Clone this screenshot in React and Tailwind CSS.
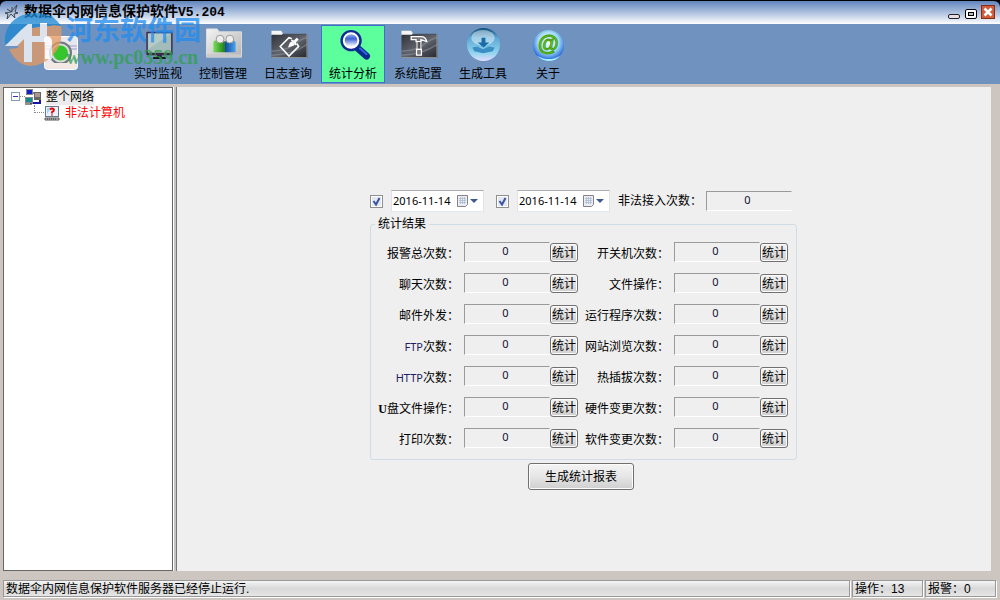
import React, { useState } from 'react';

const leftStats = ['报警总次数：', '聊天次数：', '邮件外发：', 'FTP次数：', 'HTTP次数：', 'U盘文件操作：', '打印次数：'];
const rightStats = ['开关机次数：', '文件操作：', '运行程序次数：', '网站浏览次数：', '热插拔次数：', '硬件变更次数：', '软件变更次数：'];

function MonitorIcon() {
    return (
        <svg width="40" height="36" viewBox="0 0 40 36">
            <rect x="8" y="6" width="27" height="24" rx="1" fill="#3a2a48" />
            <rect x="9.500" y="7.500" width="24" height="20" fill="#a3bcb9" />
            <path d="M10 8h23L10 24z" fill="#b7cbc6" />
            <path d="M19 30h5v2h4v2H15v-2h4z" fill="#151515" />
        </svg>
    );
}

function PeopleFolderIcon() {
    return (
        <svg width="40" height="36" viewBox="0 0 40 36">
            <defs>
                <linearGradient id="lightFolder" x1="0" y1="0" x2="1" y2="1">
                    <stop offset="0" stopColor="#f4f4f4" />
                    <stop offset="1" stopColor="#b4b4b4" />
                </linearGradient>
                <linearGradient id="greenBody" x1="0" x2="1">
                    <stop offset="0" stopColor="#7be05a" />
                    <stop offset="1" stopColor="#1b7d12" />
                </linearGradient>
                <linearGradient id="blueBody" x1="0" x2="1">
                    <stop offset="0" stopColor="#0f4a9c" />
                    <stop offset="1" stopColor="#4aa4ee" />
                </linearGradient>
            </defs>
            <path d="M3 3h11l2 3h23v26H3z" fill="url(#lightFolder)" stroke="#ddd" />
            <path d="M10 27V17q0-2 2-2h8q2 0 2 2v10z" fill="url(#greenBody)" />
            <path d="M22 27V17q0-2 2-2h6q3 0 3 3v9z" fill="url(#blueBody)" />
            <circle cx="17" cy="13.500" r="4" fill="#eee" stroke="#999" />
            <circle cx="27" cy="13.500" r="4" fill="#eee" stroke="#999" />
            <path d="M3 29h36v3H3z" fill="#c9c9c9" />
        </svg>
    );
}

function DarkFolder({ children }) {
    return (
        <svg width="40" height="36" viewBox="0 0 40 36">
            <defs>
                <linearGradient id="darkFolder" x1="0" y1="0" x2="1" y2="1">
                    <stop offset="0" stopColor="#303238" />
                    <stop offset=".5" stopColor="#60646d" />
                    <stop offset="1" stopColor="#24262b" />
                </linearGradient>
            </defs>
            <path d="M3 5h10l2 3v2H3z" fill="#f4f4f4" />
            <path d="M14 8h25v2H14z" fill="#4a4d55" />
            <path d="M3 9h37v24H3z" fill="url(#darkFolder)" />
            <path d="M3 26q16-1 23-7t14-7M3 30q20 0 37-11" fill="none" stroke="#8b8f99" strokeWidth="1.500" opacity=".6" />
            <path d="M3 32.500h36.500V9" fill="none" stroke="#999" />
            {children}
        </svg>
    );
}

function QueryIcon() {
    return (
        <DarkFolder>
            <path d="M24 13l-3-1-9 9 9 10 10-10-2-3" fill="none" stroke="#fff" strokeWidth="1.600" />
            <path d="M20 22l2-5 2-1 3 3-1 1z" fill="#fff" />
            <path d="M23 15l1-1 2 1 3-3 2 2-3 3 1 2-1 1z" fill="#fff" />
        </DarkFolder>
    );
}

function HammerIcon() {
    return (
        <DarkFolder>
            <path d="M13 11h10q5 0 6 5l-6-2v2h-5v-2h-5z" fill="#777" stroke="#fff" strokeWidth="1.300" />
            <path d="M19 16h4v8h-4z" fill="#555" stroke="#fff" />
            <path d="M18.500 24h5v6h-5z" fill="#777" stroke="#fff" strokeWidth="1.300" />
        </DarkFolder>
    );
}

function SearchIcon() {
    return (
        <svg width="40" height="36" viewBox="0 0 40 36">
            <defs>
                <linearGradient id="lens" x1="0" y1="0" x2="0" y2="1">
                    <stop offset="0" stopColor="#cfdcff" />
                    <stop offset=".4" stopColor="#3f62d4" />
                    <stop offset=".8" stopColor="#f4f8ff" />
                </linearGradient>
            </defs>
            <path d="M25 23l9 8" stroke="#0a2a8c" strokeWidth="7" strokeLinecap="round" />
            <path d="M27 23l7 6" stroke="#2f66e0" strokeWidth="2" strokeLinecap="round" />
            <circle cx="18" cy="15" r="9.500" fill="url(#lens)" stroke="#0d2b93" strokeWidth="3" />
            <circle cx="18" cy="15" r="7.500" fill="none" stroke="#fff" strokeWidth="2" />
        </svg>
    );
}

function ToolIcon() {
    return (
        <svg width="40" height="36" viewBox="0 0 40 36">
            <defs>
                <linearGradient id="toolBall" x1="0" y1="0" x2="0" y2="1">
                    <stop offset="0" stopColor="#0c4d78" />
                    <stop offset=".3" stopColor="#5da9d6" />
                    <stop offset=".75" stopColor="#8fd4ee" />
                    <stop offset="1" stopColor="#e3dcff" />
                </linearGradient>
            </defs>
            <circle cx="20.500" cy="19" r="17" fill="url(#toolBall)" />
            <ellipse cx="20" cy="12" rx="12" ry="8" fill="#fff" opacity=".45" />
            <path d="M18.500 12h4v5h4l-6 5-6-5h4z" fill="#1b6ca6" />
            <path d="M9 22l5-1 6 3 6-3 6 1-2 4-10 2-9-2z" fill="#3c8fc4" />
        </svg>
    );
}

function AboutIcon() {
    return (
        <svg width="40" height="36" viewBox="0 0 40 36">
            <defs>
                <radialGradient id="aboutBall" cx=".5" cy=".4" r=".6">
                    <stop offset="0" stopColor="#f2feff" />
                    <stop offset=".55" stopColor="#a6dcf4" />
                    <stop offset="1" stopColor="#1458d8" />
                </radialGradient>
            </defs>
            <circle cx="20.500" cy="20" r="16" fill="url(#aboutBall)" />
            <path d="M8 30q13 8 25 0-5 6-12 6T8 30z" fill="#a9f0ff" />
            <text x="20" y="26" textAnchor="middle" fontSize="22" fontWeight="bold" fontStyle="italic" fontFamily="Liberation Sans, sans-serif" fill="#6cc714" stroke="#3c9a12" strokeWidth=".8">@</text>
        </svg>
    );
}

function AppBadge() {
    return (
        <svg width="34" height="34" viewBox="0 0 34 34">
            <rect x=".5" y=".5" width="33" height="33" rx="3" fill="#e9e6ec" stroke="#fff" />
            <path d="M1 10h32M1 13h32" stroke="#b6b5d8" strokeWidth="1.500" />
            <circle cx="16.500" cy="17" r="10.500" fill="#d9dcd9" stroke="#6d7b80" strokeWidth="2" />
            <circle cx="16.500" cy="17" r="7.500" fill="#35c52c" />
            <path d="M2 27h30v5H2z" fill="#f4e9e2" />
        </svg>
    );
}

function SiteBadge() {
    return (
        <svg width="58" height="54" viewBox="0 0 58 54" className="shrink-0">
            <path d="M1 32C-1 14 12 1 31 1c13 0 22 6 26 13L46 19 12 30z" fill="#1b87d2" />
            <path d="M57 14q3 20-10 31-9 9-22 9Q12 52 5 37l9-1V28l14-12 20-3z" fill="#e79a62" />
            <path d="M12 30L28 14h18l9-2-7-8L30 2 8 14z" fill="#1b87d2" />
            <path d="M1 34l15-15 8-7h4v12h8V11h7v12q0 7-7 7h-8v20h-8V27l-7 7z" fill="#fff" />
            <path d="M36 24h6q6 0 6 6v17h-7V30h-5z" fill="#fff" />
        </svg>
    );
}

function NetworkIcon() {
    return (
        <svg width="17" height="16" viewBox="0 0 17 16">
            <path d="M7 4h5M5 10v4h8" fill="none" stroke="#000" />
            <rect x="1" y="0" width="7" height="6" fill="#888" />
            <rect x="2" y="1" width="5" height="4" fill="#1522c8" />
            <rect x="9" y="3" width="7" height="8" fill="#666" />
            <rect x="10" y="4" width="5" height="4" fill="#a89a90" />
            <rect x="0" y="8" width="8" height="6" fill="#888" />
            <rect x="1" y="9" width="6" height="4" fill="#138c8c" />
            <path d="M0 15h7" stroke="#222" />
            <path d="M8 14h7v-3" fill="none" stroke="#1616a0" strokeWidth="2" />
        </svg>
    );
}

function UnknownPcIcon() {
    return (
        <svg width="16" height="15" viewBox="0 0 16 15">
            <rect x="1.500" y=".5" width="13" height="10" fill="#e8f3ff" stroke="#66788c" />
            <path d="M3 2h4L3 8z" fill="#a8cdf4" />
            <path d="M6 3.500q2-2 4 0 0 2-2 2.500v1.500M8 8.500v1" fill="none" stroke="#e00000" strokeWidth="1.800" />
            <path d="M1 12h14v2H1z" fill="#ddd" stroke="#555" />
            <path d="M3 13h9" stroke="#333" strokeDasharray="1 1" />
        </svg>
    );
}

const tools = [
    { name: '实时监视', Icon: MonitorIcon },
    { name: '控制管理', Icon: PeopleFolderIcon },
    { name: '日志查询', Icon: QueryIcon },
    { name: '统计分析', Icon: SearchIcon },
    { name: '系统配置', Icon: HammerIcon },
    { name: '生成工具', Icon: ToolIcon },
    { name: '关于', Icon: AboutIcon },
];

function TitleBar() {
    return (
        <header className="bg-black pt-px shrink-0">
            <div className="h-[23px] rounded-t-md bg-gradient-to-b from-[#6285bd] to-white flex items-center pl-1 pr-[5px] pb-[2px]">
                <svg width="16" height="16" viewBox="0 0 16 16" className="mr-1 shrink-0">
                    <path d="M1 9l6-1 6-7-2 7 3 1-4 1 1 4-4-4-4 5 1-5zM8 3v5l-5-3" fill="none" stroke="#3f4650" />
                </svg>
                <h1 className="flex-1 text-[14px] leading-5 font-bold">
                    数据伞内网信息保护软件<span className="text-[13px] font-['Liberation_Mono',monospace]">V5.204</span>
                </h1>
                <div className="flex items-end gap-1">
                    <button aria-label="最小化" className="w-3 h-[5px] rounded-xs border border-[#222] bg-[#e8dfe6]" />
                    <button aria-label="最大化" className="w-3 h-[10px] ml-px rounded-xs border border-black bg-white flex items-center justify-center">
                        <span className="w-[6px] h-1 border border-black bg-[#bbb]" />
                    </button>
                    <button aria-label="关闭" className="w-[14px] h-[14px] border border-[#8c2a12] bg-[#cf5c3c] flex items-center justify-center">
                        <svg width="10" height="10" viewBox="0 0 10 10">
                            <path d="M1.500 1.500l7 7M8.500 1.500l-7 7" stroke="#fff" strokeWidth="2.600" />
                        </svg>
                    </button>
                </div>
            </div>
        </header>
    );
}

function Toolbar({ active, onSelect }) {
    return (
        <nav className="bg-[#6f92bf] h-[60px] shrink-0 flex items-start pt-px pl-11">
            <div className="w-[82px] pt-[11px] shrink-0">
                <AppBadge />
            </div>
            {tools.map(({ name, Icon }) => (
                <button
                    key={name}
                    onClick={() => onSelect(name)}
                    className={`w-16 h-[58px] mr-px shrink-0 border flex flex-col items-center text-[12px] leading-4 ${active === name ? 'bg-[#5cff9c] border-[#3f6fd0]' : 'border-transparent'}`}
                >
                    <Icon />
                    <span className="pt-[5px]">{name}</span>
                </button>
            ))}
        </nav>
    );
}

function Watermark() {
    return (
        <div className="absolute left-1 top-3 flex gap-1 pointer-events-none opacity-75">
            <SiteBadge />
            <div className="font-bold whitespace-nowrap pt-[3px]">
                <div className="text-[27px] leading-8 text-[#1f8cf0]">河东软件园</div>
                <div className="text-[20px] leading-5 text-[#2fa04e] font-['Liberation_Serif',serif]">www.pc0359.cn</div>
            </div>
        </div>
    );
}

function NetworkTree() {
    return (
        <aside className="w-[170px] shrink-0 bg-white border border-[#666] pl-[7px] text-[12px] leading-4">
            <div className="flex items-center">
                <button aria-label="折叠" className="w-[9px] h-[9px] border border-[#7f9db9] bg-white flex items-center justify-center">
                    <span className="w-[5px] h-px bg-[#33c]" />
                </button>
                <span className="w-[5px] border-t border-dotted border-[#888]" />
                <NetworkIcon />
                <span className="ml-1 pt-px bg-[#ececec]">整个网络</span>
            </div>
            <div className="flex items-center pl-[23px]">
                <span className="w-[10px] h-2 self-start border-l border-b border-dotted border-[#888]" />
                <UnknownPcIcon />
                <span className="ml-[5px] text-[#f00]">非法计算机</span>
            </div>
        </aside>
    );
}

function DateField({ label }) {
    const [checked, setChecked] = useState(true);
    const [date, setDate] = useState('2016-11-14');

    return (
        <div className="flex items-center gap-2">
            <div className="grid">
                <input
                    type="checkbox"
                    aria-label={`启用${label}`}
                    checked={checked}
                    onChange={(e) => setChecked(e.target.checked)}
                    className="col-start-1 row-start-1 appearance-none w-[13px] h-[13px] border border-[#8e8f8f] bg-[#e4e8ee] shadow-[inset_0_0_0_1px_#fff]"
                />
                {checked && (
                    <svg width="13" height="13" viewBox="0 0 13 13" className="col-start-1 row-start-1 pointer-events-none">
                        <path d="M3.500 6l2.500 3.500L9.500 3" fill="none" stroke="#3a55a0" strokeWidth="2" />
                    </svg>
                )}
            </div>
            <div className="flex items-center w-[93px] h-[22px] bg-white border border-t-[#abadb3] border-x-[#e2e3ea] border-b-[#e3e9ef]">
                <input
                    type="text"
                    aria-label={label}
                    value={date}
                    onChange={(e) => setDate(e.target.value)}
                    className="flex-1 min-w-0 pl-px text-[11px] leading-4 font-['Noto_Sans',sans-serif]"
                />
                <button aria-label={`选择${label}`} className="shrink-0 pr-[5px]">
                    <svg width="22" height="14" viewBox="0 0 22 14">
                        <path d="M1.500 1.500h10v9l-2 2h-8z" fill="#e9edf4" stroke="#8a7f86" />
                        <path d="M3 4.500h7M3 6.500h7M3 8.500h7M4.500 3v7M6.500 3v7M8.500 3v7" stroke="#a9b6cc" strokeWidth=".7" />
                        <path d="M14 5h8l-4 4z" fill="#3d5a90" />
                    </svg>
                </button>
            </div>
        </div>
    );
}

function ValueBox({ id }) {
    return (
        <input
            id={id}
            type="text"
            readOnly
            value="0"
            className="w-[86px] h-5 pr-[3px] pb-[3px] text-center text-[11px] leading-4 text-[#101030] font-['Noto_Sans',sans-serif] border border-t-[#9a9a9a] border-l-[#9a9a9a] border-r-[#efefef] border-b-white"
        />
    );
}

function StatLabel({ text }) {
    const latin = text.match(/^[A-Z]+/)?.[0] ?? '';
    return (
        <>
            {latin && (
                <span className={latin === 'U' ? "font-bold font-['Liberation_Serif',serif]" : "text-[11px] text-[#202060] font-['Noto_Sans',sans-serif]"}>{latin}</span>
            )}
            {text.slice(latin.length)}
        </>
    );
}

function StatRow({ id, text }) {
    return (
        <div className="flex justify-end items-start">
            <label htmlFor={id} className="mr-[5px] pt-1 leading-4 whitespace-nowrap">
                <StatLabel text={text} />
            </label>
            <ValueBox id={id} />
            <button className="mt-px w-7 h-[19px] pt-px leading-4 whitespace-nowrap flex items-center justify-center rounded-[3px] border border-[#707070] bg-gradient-to-b from-[#f2f2f2] to-[#cfcfcf] shadow-[inset_0_0_0_1px_#fcfcfc]">
                统计
            </button>
        </div>
    );
}

function Statistics() {
    return (
        <main className="flex-1 bg-[#efefef] flex justify-center pt-[103px] pr-[2px] text-[12px]">
            <div className="w-[426px] flex flex-col">
                <div className="flex items-center">
                    <DateField label="开始日期" />
                    <span className="w-3" />
                    <DateField label="结束日期" />
                    <label htmlFor="illegal" className="ml-2 mr-1 leading-4 whitespace-nowrap">非法接入次数：</label>
                    <ValueBox id="illegal" />
                </div>
                <fieldset className="mt-1 border border-[#d0dce8] rounded-[3px] pr-2 pb-[11px]">
                    <legend className="ml-1 px-[3px] leading-4">统计结果</legend>
                    <div className="grid grid-cols-[207px_210px] justify-end gap-y-[11px] pt-[10px]">
                        {leftStats.map((text, i) => (
                            <React.Fragment key={text}>
                                <StatRow id={`left${i}`} text={text} />
                                <StatRow id={`right${i}`} text={rightStats[i]} />
                            </React.Fragment>
                        ))}
                    </div>
                </fieldset>
                <div className="flex justify-center pt-[3px] pr-1">
                    <button className="w-[106px] h-[27px] pt-px rounded-[3px] border border-[#707070] bg-gradient-to-b from-[#f4f4f4] via-[#e6e6e6] to-[#cfcfcf] shadow-[inset_0_0_0_1px_#fcfcfc]">
                        生成统计报表
                    </button>
                </div>
            </div>
        </main>
    );
}

function StatusPane({ className, children }) {
    return (
        <div className={`h-[17px] px-0.5 leading-4 border border-[#999] shadow-[1px_1px_0_#fff] bg-gradient-to-b from-[#f5f5f5] via-[#d8d8d8] to-[#e6e6e6] whitespace-nowrap ${className}`}>
            {children}
        </div>
    );
}

export default function App() {
    const [active, setActive] = useState('统计分析');

    return (
        <div className="relative h-screen flex flex-col bg-[#cdc5bf] text-black overflow-hidden font-['Liberation_Sans','Noto_Sans_CJK_SC',sans-serif]">
            <TitleBar />
            <Toolbar active={active} onSelect={setActive} />
            <div className="flex-1 min-h-0 flex pt-[3px] pl-[3px] pr-[9px]">
                <NetworkTree />
                <div className="w-1 shrink-0 bg-[#c4c4c4] border-l border-l-white border-r border-r-[#777]" />
                <Statistics />
            </div>
            <footer className="shrink-0 flex gap-[2px] pt-[9px] pb-[3px] pl-[3px] pr-1 text-[12px]">
                <StatusPane className="flex-1">数据伞内网信息保护软件服务器已经停止运行.</StatusPane>
                <StatusPane className="w-[71px]">操作：13</StatusPane>
                <StatusPane className="w-[71px]">报警：0</StatusPane>
            </footer>
            <Watermark />
        </div>
    );
}
